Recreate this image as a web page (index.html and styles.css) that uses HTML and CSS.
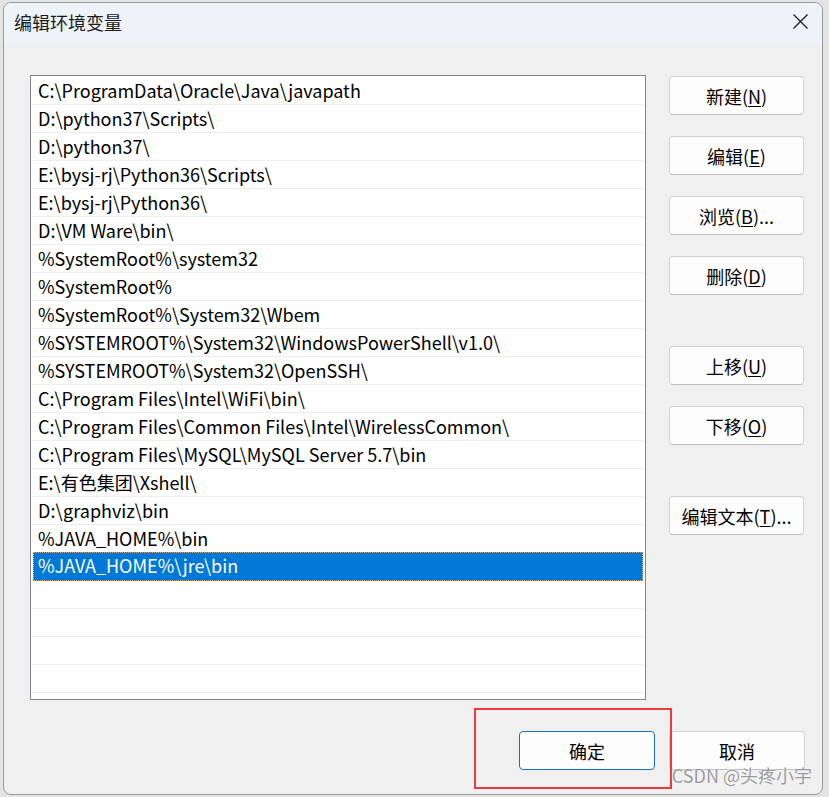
FILE: index.html
```html
<!DOCTYPE html>
<html lang="zh-CN">
<head>
    <meta charset="UTF-8">
    <meta name="viewport" content="width=device-width, initial-scale=1.0">
    <title>编辑环境变量</title>
    <link rel="stylesheet" href="styles.css">
</head>
<body>

<div class="dialog">
    <div class="titlebar">
        <span class="title">编辑环境变量</span>
        <svg class="close" width="15" height="15" viewBox="0 0 15 15">
            <path d="M0.5 0.5 L14.5 14.5 M14.5 0.5 L0.5 14.5" stroke="#1b1b1b" stroke-width="1.3" fill="none"/>
        </svg>
    </div>

    <div class="main">
        <div class="path-list">
            <div class="row">C:\ProgramData\Oracle\Java\javapath</div>
            <div class="row">D:\python37\Scripts\</div>
            <div class="row">D:\python37\</div>
            <div class="row">E:\bysj-rj\Python36\Scripts\</div>
            <div class="row">E:\bysj-rj\Python36\</div>
            <div class="row">D:\VM Ware\bin\</div>
            <div class="row">%SystemRoot%\system32</div>
            <div class="row">%SystemRoot%</div>
            <div class="row">%SystemRoot%\System32\Wbem</div>
            <div class="row">%SYSTEMROOT%\System32\WindowsPowerShell\v1.0\</div>
            <div class="row">%SYSTEMROOT%\System32\OpenSSH\</div>
            <div class="row">C:\Program Files\Intel\WiFi\bin\</div>
            <div class="row">C:\Program Files\Common Files\Intel\WirelessCommon\</div>
            <div class="row">C:\Program Files\MySQL\MySQL Server 5.7\bin</div>
            <div class="row">E:\有色集团\Xshell\</div>
            <div class="row">D:\graphviz\bin</div>
            <div class="row">%JAVA_HOME%\bin</div>
            <div class="row selected">%JAVA_HOME%\jre\bin</div>
            <div class="row"></div>
            <div class="row"></div>
            <div class="row"></div>
            <div class="row"></div>
            <div class="row"></div>
        </div>

        <div class="side-buttons">
            <button class="btn">新建(<u>N</u>)</button>
            <button class="btn">编辑(<u>E</u>)</button>
            <button class="btn">浏览(<u>B</u>)...</button>
            <button class="btn">删除(<u>D</u>)</button>
            <button class="btn group-start">上移(<u>U</u>)</button>
            <button class="btn">下移(<u>O</u>)</button>
            <button class="btn group-start">编辑文本(<u>T</u>)...</button>
        </div>
    </div>

    <div class="footer">
        <button class="btn default">确定</button>
        <button class="btn">取消</button>
    </div>

    <div class="highlight"></div>
    <div class="watermark">CSDN @头疼小宇</div>
</div>

</body>
</html>
```

FILE: styles.css
```css
body {
    margin: 0;
    width: 829px;
    height: 797px;
    overflow: hidden;
    background-color: #e4e4e4;
    font-family: "Microsoft YaHei UI", "Noto Sans CJK SC", sans-serif;
    color: #000;
}
.dialog {
    position: relative;
    margin: 2px 0 0 3px;
    width: 818px;
    height: 791px;
    border: 1px solid #9a9a9a;
    border-radius: 8px;
    background-color: #f0f0f0;
    overflow: hidden;
    display: flex;
    flex-direction: column;
}
.titlebar {
    height: 41px;
    flex-shrink: 0;
    background-color: #eef3f9;
    display: flex;
    align-items: center;
    justify-content: space-between;
    padding: 0 14px 0 10px;
}
.title {
    font-size: 18px;
    color: #1a1a1a;
    margin-top: -4px;
}
.close {
    margin-top: -4px;
}
.main {
    display: flex;
    padding: 31px 18px 0 26px;
}
.path-list {
    width: 614px;
    height: 622px;
    border: 1px solid #82868e;
    background-color: #fff;
    padding: 1px 1px 0 1px;
    box-sizing: content-box;
    overflow: hidden;
}
.row {
    height: 27px;
    line-height: 27px;
    border-bottom: 1px solid #efefef;
    padding-left: 6px;
    font-size: 18px;
    white-space: nowrap;
}
.row.selected {
    background-color: #0078d7;
    border-bottom-color: #0078d7;
    color: #fff;
    outline: 1px dotted #e6a35a;
    outline-offset: -1px;
    margin: -1px 1px 0 1px;
    height: 28px;
    padding-left: 5px;
}
.side-buttons {
    display: flex;
    flex-direction: column;
    gap: 21px;
    margin-left: 23px;
    padding-top: 1px;
}
.btn {
    width: 135px;
    height: 39px;
    padding: 0;
    background-color: #fdfdfd;
    border: 1px solid #d2d2d2;
    border-bottom-color: #bdbdbd;
    border-radius: 4px;
    font-family: "Microsoft YaHei UI", "Noto Sans CJK SC", sans-serif;
    font-size: 18px;
    color: #000;
}
.btn u {
    text-underline-offset: 2px;
}
.side-buttons .group-start {
    margin-top: 30px;
}
.footer {
    display: flex;
    justify-content: flex-end;
    gap: 14px;
    padding: 31px 17px 0 0;
}
.footer .btn {
    width: 136px;
}
.btn.default {
    border: 1px solid #1a6fc4;
}
.highlight {
    position: absolute;
    left: 470px;
    top: 705px;
    width: 194px;
    height: 77px;
    border: 2px solid #ee3a3a;
}
.watermark {
    position: absolute;
    right: 10px;
    bottom: 6px;
    font-size: 18px;
    color: #9a9a9a;
    text-shadow: 0 0 2px #fff, 0 0 1px #fff;
}
```
